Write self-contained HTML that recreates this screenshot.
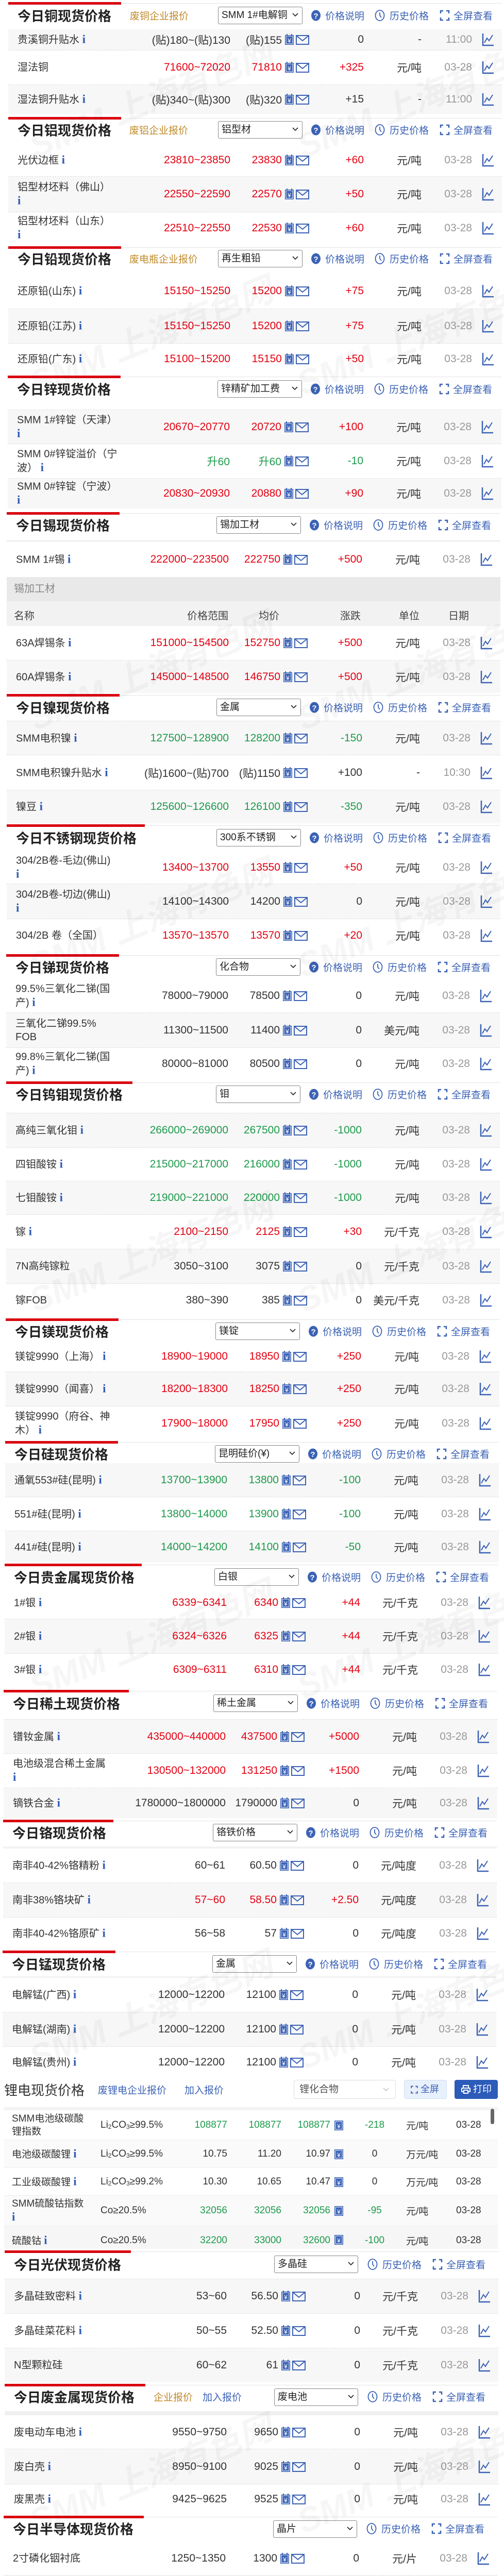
<!DOCTYPE html>
<html><head><meta charset="utf-8">
<style>
*{margin:0;padding:0;box-sizing:border-box}
html,body{width:978px;height:5140px;overflow:hidden}
body{background:#fff;font-family:"Liberation Sans","Noto Sans CJK SC",sans-serif;color:#333}
#root{position:relative;width:978px;height:5140px;overflow:hidden}
.w{position:absolute;left:0;top:0;width:978px;height:5140px}
.r{position:absolute;left:16px;width:958px;border-bottom:1px dashed #dcdcdc;font-size:21px;color:#333;background:#fff}
.r.g{background:#f7f7f7}
.r>*{position:absolute;top:50%;transform:translateY(-50%);white-space:nowrap}
.n{left:18px;width:210px;line-height:26px;font-size:20px;white-space:normal!important}
.n i,.li i{font-family:"Liberation Serif",serif;font-weight:bold;font-style:normal;color:#2f5bb5;font-size:23px}
.a{right:527px}.b{right:427px}.ic{left:536px}.c{right:268px}.d{right:156px}.e{right:58px;color:#999}.ch{left:919px}
.R{color:#e60012}.G{color:#1e9a4c}
.rb{position:absolute;left:16px;height:5px;background:#d9000f}
.hl{position:absolute;left:16px;width:958px;height:1px;background:#e4e4e4}
.t{position:absolute;left:34px;font-size:26px;font-weight:bold;color:#222;transform:translateY(-50%);white-space:nowrap}
.lk{position:absolute;font-size:19px;color:#c08a2a;transform:translateY(-50%);white-space:nowrap}
.lb{color:#3b62b5}
.sel{position:absolute;left:423px;width:164px;height:34px;border:1px solid #888;border-radius:3px;background:#fff;font-size:19px;line-height:32px;padding-left:6px;color:#222;overflow:hidden;white-space:nowrap}
.sel svg{position:absolute;right:7px;top:11px}
.s2{left:539px;width:163px}
.tl{position:absolute;font-size:19px;color:#3b62b5;transform:translateY(-50%);white-space:nowrap}
.ti{position:absolute;transform:translateY(-50%)}
.band{position:absolute;left:13px;width:958px}
.wm{position:absolute;font-size:66px;font-weight:bold;color:rgba(0,0,0,0.035);transform:rotate(-22deg);white-space:nowrap;z-index:5;pointer-events:none;font-style:italic}
.lr{position:absolute;left:8px;width:958px;border-bottom:1px solid #eee;font-size:19px;color:#333}
.lr>*{position:absolute;top:50%;transform:translateY(-50%);white-space:nowrap}
.li{left:15px;width:160px;line-height:25px;white-space:normal!important}
.sp{left:187px}.v1{right:525px}.v2{right:420px}.v3{right:325px}.yi{left:640px}.v4{left:680px;width:78px;text-align:center}.un{left:780px}.dt{left:877px}
sub{font-size:12px;vertical-align:-2px}
</style></head><body><div id="root">
<svg width="0" height="0" style="position:absolute">
<defs>
<symbol id="ye" viewBox="0 0 50 22"><rect x="1" y="2" width="17" height="19" fill="#3b62b5"/><rect x="3" y="4" width="13" height="15" fill="none" stroke="#fff" stroke-width="1"/><rect x="4" y="0" width="2" height="4" fill="#3b62b5"/><rect x="13" y="0" width="2" height="4" fill="#3b62b5"/><text x="9.5" y="17" font-size="12" fill="#fff" text-anchor="middle" font-family="Liberation Sans">¥</text><rect x="23" y="3" width="24" height="17" fill="none" stroke="#3b62b5" stroke-width="2"/><polyline points="23,3 35,13 47,3" fill="none" stroke="#3b62b5" stroke-width="2"/></symbol>
<symbol id="yo" viewBox="0 0 18 22"><rect x="1" y="2" width="17" height="19" fill="#3b62b5"/><rect x="3" y="4" width="13" height="15" fill="none" stroke="#fff" stroke-width="1"/><text x="9.5" y="17" font-size="12" fill="#fff" text-anchor="middle" font-family="Liberation Sans">¥</text></symbol>
<symbol id="ch" viewBox="0 0 24 26"><path d="M2 1V24H23" fill="none" stroke="#3b62b5" stroke-width="2.5"/><polyline points="5,19 10,10 14,15 21,4" fill="none" stroke="#3b62b5" stroke-width="2"/></symbol>
<symbol id="q" viewBox="0 0 20 22"><ellipse cx="10" cy="11" rx="9" ry="10.5" fill="#3b62b5"/><text x="10" y="17" font-size="15" font-weight="bold" fill="#fff" text-anchor="middle" font-family="Liberation Sans">?</text></symbol>
<symbol id="ck" viewBox="0 0 20 22"><ellipse cx="10" cy="11" rx="8.5" ry="10" fill="none" stroke="#3b62b5" stroke-width="1.8"/><path d="M10 5V11L13 15" fill="none" stroke="#3b62b5" stroke-width="1.8"/></symbol>
<symbol id="fs" viewBox="0 0 20 22"><path d="M2 7V2H7M13 2H18V7M18 15V20H13M7 20H2V15" fill="none" stroke="#3b62b5" stroke-width="2.5"/></symbol>
<symbol id="dn" viewBox="0 0 12 8"><polyline points="1,1 6,6 11,1" fill="none" stroke="#222" stroke-width="1.6"/></symbol>
</defs></svg>

<div class="wm" style="left:40px;top:140px">SMM 上海有色网</div><div class="wm" style="left:560px;top:140px">SMM 上海有色网</div>
<div class="wm" style="left:40px;top:600px">SMM 上海有色网</div><div class="wm" style="left:560px;top:600px">SMM 上海有色网</div>
<div class="wm" style="left:40px;top:1250px">SMM 上海有色网</div><div class="wm" style="left:560px;top:1250px">SMM 上海有色网</div>
<div class="wm" style="left:40px;top:1730px">SMM 上海有色网</div><div class="wm" style="left:560px;top:1730px">SMM 上海有色网</div>
<div class="wm" style="left:40px;top:2380px">SMM 上海有色网</div><div class="wm" style="left:560px;top:2380px">SMM 上海有色网</div>
<div class="wm" style="left:40px;top:3130px">SMM 上海有色网</div><div class="wm" style="left:560px;top:3130px">SMM 上海有色网</div>
<div class="wm" style="left:40px;top:3850px">SMM 上海有色网</div><div class="wm" style="left:560px;top:3850px">SMM 上海有色网</div>
<div class="wm" style="left:40px;top:4750px">SMM 上海有色网</div><div class="wm" style="left:560px;top:4750px">SMM 上海有色网</div>

<!-- COPPER -->
<div class="w">
<div class="r g" style="top:57px;height:41px"><span class="n">贵溪铜升贴水 <i>i</i></span><span class="a">(贴)180~(贴)130</span><span class="b">(贴)155</span><svg class="ic" width="50" height="22"><use href="#ye"/></svg><span class="c">0</span><span class="d">-</span><span class="e">11:00</span><svg class="ch" width="24" height="26"><use href="#ch"/></svg></div>
<div class="r" style="top:98px;height:67px"><span class="n">湿法铜</span><span class="a R">71600~72020</span><span class="b R">71810</span><svg class="ic" width="50" height="22"><use href="#ye"/></svg><span class="c R">+325</span><span class="d">元/吨</span><span class="e">03-28</span><svg class="ch" width="24" height="26"><use href="#ch"/></svg></div>
<div class="r g" style="top:165px;height:56px;border-bottom:none"><span class="n">湿法铜升贴水 <i>i</i></span><span class="a">(贴)340~(贴)300</span><span class="b">(贴)320</span><svg class="ic" width="50" height="22"><use href="#ye"/></svg><span class="c">+15</span><span class="d">-</span><span class="e">11:00</span><svg class="ch" width="24" height="26"><use href="#ch"/></svg></div>
<div class="band" style="top:0;left:16px;height:56px;background:#fff"></div>
<div class="hl" style="top:6px"></div><div class="rb" style="top:4px;width:219px"></div>
<div class="t" style="top:30px">今日铜现货价格</div>
<div class="lk" style="top:30px;left:252px">废铜企业报价</div>
<div class="sel" style="top:13px">SMM 1#电解铜<svg width="12" height="8"><use href="#dn"/></svg></div>
<svg class="ti" style="left:603px;top:30px" width="20" height="22"><use href="#q"/></svg><div class="tl" style="left:631px;top:30px">价格说明</div>
<svg class="ti" style="left:727px;top:30px" width="20" height="22"><use href="#ck"/></svg><div class="tl" style="left:756px;top:30px">历史价格</div>
<svg class="ti" style="left:853px;top:30px" width="20" height="22"><use href="#fs"/></svg><div class="tl" style="left:880px;top:30px">全屏查看</div>
</div>

<!-- ALUMINIUM -->
<div class="w">
<div class="hl" style="top:229px"></div><div class="rb" style="top:227px;width:219px"></div>
<div class="t" style="top:252px">今日铝现货价格</div>
<div class="lk" style="top:252px;left:251px">废铝企业报价</div>
<div class="sel" style="top:235px">铝型材<svg width="12" height="8"><use href="#dn"/></svg></div>
<svg class="ti" style="left:603px;top:252px" width="20" height="22"><use href="#q"/></svg><div class="tl" style="left:631px;top:252px">价格说明</div>
<svg class="ti" style="left:727px;top:252px" width="20" height="22"><use href="#ck"/></svg><div class="tl" style="left:756px;top:252px">历史价格</div>
<svg class="ti" style="left:853px;top:252px" width="20" height="22"><use href="#fs"/></svg><div class="tl" style="left:880px;top:252px">全屏查看</div>
<div class="r" style="top:280px;height:63px"><span class="n">光伏边框 <i>i</i></span><span class="a R">23810~23850</span><span class="b R">23830</span><svg class="ic" width="50" height="22"><use href="#ye"/></svg><span class="c R">+60</span><span class="d">元/吨</span><span class="e">03-28</span><svg class="ch" width="24" height="26"><use href="#ch"/></svg></div>
<div class="r g" style="top:343px;height:69px"><span class="n">铝型材坯料（佛山）<br><i>i</i></span><span class="a R">22550~22590</span><span class="b R">22570</span><svg class="ic" width="50" height="22"><use href="#ye"/></svg><span class="c R">+50</span><span class="d">元/吨</span><span class="e">03-28</span><svg class="ch" width="24" height="26"><use href="#ch"/></svg></div>
<div class="r" style="top:412px;height:62px;border-bottom:none"><span class="n">铝型材坯料（山东）<br><i>i</i></span><span class="a R">22510~22550</span><span class="b R">22530</span><svg class="ic" width="50" height="22"><use href="#ye"/></svg><span class="c R">+60</span><span class="d">元/吨</span><span class="e">03-28</span><svg class="ch" width="24" height="26"><use href="#ch"/></svg></div>
</div>

<!-- LEAD -->
<div class="w">
<div class="hl" style="top:480px"></div><div class="rb" style="top:478px;width:219px"></div>
<div class="t" style="top:502px">今日铅现货价格</div>
<div class="lk" style="top:502px;left:251px">废电瓶企业报价</div>
<div class="sel" style="top:485px">再生粗铅<svg width="12" height="8"><use href="#dn"/></svg></div>
<svg class="ti" style="left:603px;top:502px" width="20" height="22"><use href="#q"/></svg><div class="tl" style="left:631px;top:502px">价格说明</div>
<svg class="ti" style="left:727px;top:502px" width="20" height="22"><use href="#ck"/></svg><div class="tl" style="left:756px;top:502px">历史价格</div>
<svg class="ti" style="left:853px;top:502px" width="20" height="22"><use href="#fs"/></svg><div class="tl" style="left:880px;top:502px">全屏查看</div>
<div class="r" style="top:530px;height:70px"><span class="n">还原铅(山东) <i>i</i></span><span class="a R">15150~15250</span><span class="b R">15200</span><svg class="ic" width="50" height="22"><use href="#ye"/></svg><span class="c R">+75</span><span class="d">元/吨</span><span class="e">03-28</span><svg class="ch" width="24" height="26"><use href="#ch"/></svg></div>
<div class="r g" style="top:600px;height:67px"><span class="n">还原铅(江苏) <i>i</i></span><span class="a R">15150~15250</span><span class="b R">15200</span><svg class="ic" width="50" height="22"><use href="#ye"/></svg><span class="c R">+75</span><span class="d">元/吨</span><span class="e">03-28</span><svg class="ch" width="24" height="26"><use href="#ch"/></svg></div>
<div class="r" style="top:667px;height:59px;border-bottom:none"><span class="n">还原铅(广东) <i>i</i></span><span class="a R">15100~15200</span><span class="b R">15150</span><svg class="ic" width="50" height="22"><use href="#ye"/></svg><span class="c R">+50</span><span class="d">元/吨</span><span class="e">03-28</span><svg class="ch" width="24" height="26"><use href="#ch"/></svg></div>
</div>

<!-- ZINC -->
<div class="w" style="left:-1px">
<div class="hl" style="top:731px"></div><div class="rb" style="top:729px;width:219px"></div>
<div class="t" style="top:755px">今日锌现货价格</div>
<div class="sel" style="top:738px">锌精矿加工费<svg width="12" height="8"><use href="#dn"/></svg></div>
<svg class="ti" style="left:603px;top:755px" width="20" height="22"><use href="#q"/></svg><div class="tl" style="left:631px;top:755px">价格说明</div>
<svg class="ti" style="left:727px;top:755px" width="20" height="22"><use href="#ck"/></svg><div class="tl" style="left:756px;top:755px">历史价格</div>
<svg class="ti" style="left:853px;top:755px" width="20" height="22"><use href="#fs"/></svg><div class="tl" style="left:880px;top:755px">全屏查看</div>
<div class="hl" style="top:795px;background:none;border-top:1px dashed #dcdcdc"></div>
<div class="r g" style="top:796px;height:66px"><span class="n">SMM 1#锌锭（天津）<br><i>i</i></span><span class="a R">20670~20770</span><span class="b R">20720</span><svg class="ic" width="50" height="22"><use href="#ye"/></svg><span class="c R">+100</span><span class="d">元/吨</span><span class="e">03-28</span><svg class="ch" width="24" height="26"><use href="#ch"/></svg></div>
<div class="r" style="top:862px;height:67px"><span class="n">SMM 0#锌锭溢价（宁<br>波） <i>i</i></span><span class="a G">升60</span><span class="b G">升60</span><svg class="ic" width="50" height="22"><use href="#ye"/></svg><span class="c G">-10</span><span class="d">元/吨</span><span class="e">03-28</span><svg class="ch" width="24" height="26"><use href="#ch"/></svg></div>
<div class="r g" style="top:929px;height:58px;border-bottom:none"><span class="n">SMM 0#锌锭（宁波）<br><i>i</i></span><span class="a R">20830~20930</span><span class="b R">20880</span><svg class="ic" width="50" height="22"><use href="#ye"/></svg><span class="c R">+90</span><span class="d">元/吨</span><span class="e">03-28</span><svg class="ch" width="24" height="26"><use href="#ch"/></svg></div>
</div>

<!-- TIN -->
<div class="w" style="left:-3px">
<div class="hl" style="top:996px"></div><div class="rb" style="top:994px;width:219px"></div>
<div class="t" style="top:1019px">今日锡现货价格</div>
<div class="sel" style="top:1002px">锡加工材<svg width="12" height="8"><use href="#dn"/></svg></div>
<svg class="ti" style="left:603px;top:1019px" width="20" height="22"><use href="#q"/></svg><div class="tl" style="left:631px;top:1019px">价格说明</div>
<svg class="ti" style="left:727px;top:1019px" width="20" height="22"><use href="#ck"/></svg><div class="tl" style="left:756px;top:1019px">历史价格</div>
<svg class="ti" style="left:853px;top:1019px" width="20" height="22"><use href="#fs"/></svg><div class="tl" style="left:880px;top:1019px">全屏查看</div>
<div class="r" style="top:1048px;height:72px;border-bottom:none;border-top:4px solid #f2f2f2"><span class="n">SMM 1#锡 <i>i</i></span><span class="a R">222000~223500</span><span class="b R">222750</span><svg class="ic" width="50" height="22"><use href="#ye"/></svg><span class="c R">+500</span><span class="d">元/吨</span><span class="e">03-28</span><svg class="ch" width="24" height="26"><use href="#ch"/></svg></div>
<div class="band" style="top:1120px;left:16px;height:47px;background:#e9e9e9;font-size:20px;color:#888;padding-left:14px;line-height:47px">锡加工材</div>
<div class="band" style="top:1167px;left:16px;height:48px;background:#f2f2f2;font-size:20px;color:#444">
<span style="position:absolute;left:14px;top:12px">名称</span><span style="position:absolute;left:350px;top:12px">价格范围</span><span style="position:absolute;left:489px;top:12px">均价</span><span style="position:absolute;left:647px;top:12px">涨跌</span><span style="position:absolute;left:761px;top:12px">单位</span><span style="position:absolute;left:857px;top:12px">日期</span></div>
<div class="r" style="top:1215px;height:67px"><span class="n">63A焊锡条 <i>i</i></span><span class="a R">151000~154500</span><span class="b R">152750</span><svg class="ic" width="50" height="22"><use href="#ye"/></svg><span class="c R">+500</span><span class="d">元/吨</span><span class="e">03-28</span><svg class="ch" width="24" height="26"><use href="#ch"/></svg></div>
<div class="r g" style="top:1282px;height:63px;border-bottom:none"><span class="n">60A焊锡条 <i>i</i></span><span class="a R">145000~148500</span><span class="b R">146750</span><svg class="ic" width="50" height="22"><use href="#ye"/></svg><span class="c R">+500</span><span class="d">元/吨</span><span class="e">03-28</span><svg class="ch" width="24" height="26"><use href="#ch"/></svg></div>
</div>

<!-- NICKEL -->
<div class="w" style="left:-3px">
<div class="hl" style="top:1349px"></div><div class="rb" style="top:1347px;width:219px"></div>
<div class="t" style="top:1373px">今日镍现货价格</div>
<div class="sel" style="top:1356px">金属<svg width="12" height="8"><use href="#dn"/></svg></div>
<svg class="ti" style="left:603px;top:1373px" width="20" height="22"><use href="#q"/></svg><div class="tl" style="left:631px;top:1373px">价格说明</div>
<svg class="ti" style="left:727px;top:1373px" width="20" height="22"><use href="#ck"/></svg><div class="tl" style="left:756px;top:1373px">历史价格</div>
<svg class="ti" style="left:853px;top:1373px" width="20" height="22"><use href="#fs"/></svg><div class="tl" style="left:880px;top:1373px">全屏查看</div>
<div class="r g" style="top:1399px;height:67px;border-top:1px dashed #dcdcdc"><span class="n">SMM电积镍 <i>i</i></span><span class="a G">127500~128900</span><span class="b G">128200</span><svg class="ic" width="50" height="22"><use href="#ye"/></svg><span class="c G">-150</span><span class="d">元/吨</span><span class="e">03-28</span><svg class="ch" width="24" height="26"><use href="#ch"/></svg></div>
<div class="r" style="top:1466px;height:68px"><span class="n">SMM电积镍升贴水 <i>i</i></span><span class="a">(贴)1600~(贴)700</span><span class="b">(贴)1150</span><svg class="ic" width="50" height="22"><use href="#ye"/></svg><span class="c">+100</span><span class="d">-</span><span class="e">10:30</span><svg class="ch" width="24" height="26"><use href="#ch"/></svg></div>
<div class="r g" style="top:1534px;height:64px;border-bottom:none"><span class="n">镍豆 <i>i</i></span><span class="a G">125600~126600</span><span class="b G">126100</span><svg class="ic" width="50" height="22"><use href="#ye"/></svg><span class="c G">-350</span><span class="d">元/吨</span><span class="e">03-28</span><svg class="ch" width="24" height="26"><use href="#ch"/></svg></div>
</div>

<!-- STAINLESS -->
<div class="w" style="left:-3px">
<div class="hl" style="top:1602px"></div><div class="rb" style="top:1600px;width:268px"></div>
<div class="t" style="top:1626px">今日不锈钢现货价格</div>
<div class="sel" style="top:1609px">300系不锈钢<svg width="12" height="8"><use href="#dn"/></svg></div>
<svg class="ti" style="left:603px;top:1626px" width="20" height="22"><use href="#q"/></svg><div class="tl" style="left:631px;top:1626px">价格说明</div>
<svg class="ti" style="left:727px;top:1626px" width="20" height="22"><use href="#ck"/></svg><div class="tl" style="left:756px;top:1626px">历史价格</div>
<svg class="ti" style="left:853px;top:1626px" width="20" height="22"><use href="#fs"/></svg><div class="tl" style="left:880px;top:1626px">全屏查看</div>
<div class="r" style="top:1652px;height:64px"><span class="n">304/2B卷-毛边(佛山)<br><i>i</i></span><span class="a R">13400~13700</span><span class="b R">13550</span><svg class="ic" width="50" height="22"><use href="#ye"/></svg><span class="c R">+50</span><span class="d">元/吨</span><span class="e">03-28</span><svg class="ch" width="24" height="26"><use href="#ch"/></svg></div>
<div class="r g" style="top:1716px;height:68px"><span class="n">304/2B卷-切边(佛山)<br><i>i</i></span><span class="a">14100~14300</span><span class="b">14200</span><svg class="ic" width="50" height="22"><use href="#ye"/></svg><span class="c">0</span><span class="d">元/吨</span><span class="e">03-28</span><svg class="ch" width="24" height="26"><use href="#ch"/></svg></div>
<div class="r" style="top:1784px;height:63px;border-bottom:none"><span class="n">304/2B 卷（全国）</span><span class="a R">13570~13570</span><span class="b R">13570</span><svg class="ic" width="50" height="22"><use href="#ye"/></svg><span class="c R">+20</span><span class="d">元/吨</span><span class="e">03-28</span><svg class="ch" width="24" height="26"><use href="#ch"/></svg></div>
</div>

<!-- ANTIMONY -->
<div class="w" style="left:-4px">
<div class="hl" style="top:1854px"></div><div class="rb" style="top:1852px;width:219px"></div>
<div class="t" style="top:1877px">今日锑现货价格</div>
<div class="sel" style="top:1860px">化合物<svg width="12" height="8"><use href="#dn"/></svg></div>
<svg class="ti" style="left:603px;top:1877px" width="20" height="22"><use href="#q"/></svg><div class="tl" style="left:631px;top:1877px">价格说明</div>
<svg class="ti" style="left:727px;top:1877px" width="20" height="22"><use href="#ck"/></svg><div class="tl" style="left:756px;top:1877px">历史价格</div>
<svg class="ti" style="left:853px;top:1877px" width="20" height="22"><use href="#fs"/></svg><div class="tl" style="left:880px;top:1877px">全屏查看</div>
<div class="r" style="top:1900px;height:66px"><span class="n">99.5%三氧化二锑(国<br>产) <i>i</i></span><span class="a">78000~79000</span><span class="b">78500</span><svg class="ic" width="50" height="22"><use href="#ye"/></svg><span class="c">0</span><span class="d">元/吨</span><span class="e">03-28</span><svg class="ch" width="24" height="26"><use href="#ch"/></svg></div>
<div class="r g" style="top:1966px;height:68px"><span class="n">三氧化二锑99.5%<br>FOB</span><span class="a">11300~11500</span><span class="b">11400</span><svg class="ic" width="50" height="22"><use href="#ye"/></svg><span class="c">0</span><span class="d">美元/吨</span><span class="e">03-28</span><svg class="ch" width="24" height="26"><use href="#ch"/></svg></div>
<div class="r" style="top:2034px;height:62px;border-bottom:none"><span class="n">99.8%三氧化二锑(国<br>产) <i>i</i></span><span class="a">80000~81000</span><span class="b">80500</span><svg class="ic" width="50" height="22"><use href="#ye"/></svg><span class="c">0</span><span class="d">元/吨</span><span class="e">03-28</span><svg class="ch" width="24" height="26"><use href="#ch"/></svg></div>
</div>

<!-- TUNGSTEN MOLY -->
<div class="w" style="left:-4px">
<div class="hl" style="top:2101px"></div><div class="rb" style="top:2099px;width:245px"></div>
<div class="t" style="top:2124px">今日钨钼现货价格</div>
<div class="sel" style="top:2107px">钼<svg width="12" height="8"><use href="#dn"/></svg></div>
<svg class="ti" style="left:603px;top:2124px" width="20" height="22"><use href="#q"/></svg><div class="tl" style="left:631px;top:2124px">价格说明</div>
<svg class="ti" style="left:727px;top:2124px" width="20" height="22"><use href="#ck"/></svg><div class="tl" style="left:756px;top:2124px">历史价格</div>
<svg class="ti" style="left:853px;top:2124px" width="20" height="22"><use href="#fs"/></svg><div class="tl" style="left:880px;top:2124px">全屏查看</div>
<div class="r g" style="top:2160px;height:68px;border-top:1px dashed #dcdcdc"><span class="n">高纯三氧化钼 <i>i</i></span><span class="a G">266000~269000</span><span class="b G">267500</span><svg class="ic" width="50" height="22"><use href="#ye"/></svg><span class="c G">-1000</span><span class="d">元/吨</span><span class="e">03-28</span><svg class="ch" width="24" height="26"><use href="#ch"/></svg></div>
<div class="r" style="top:2228px;height:65px"><span class="n">四钼酸铵 <i>i</i></span><span class="a G">215000~217000</span><span class="b G">216000</span><svg class="ic" width="50" height="22"><use href="#ye"/></svg><span class="c G">-1000</span><span class="d">元/吨</span><span class="e">03-28</span><svg class="ch" width="24" height="26"><use href="#ch"/></svg></div>
<div class="r g" style="top:2293px;height:65px"><span class="n">七钼酸铵 <i>i</i></span><span class="a G">219000~221000</span><span class="b G">220000</span><svg class="ic" width="50" height="22"><use href="#ye"/></svg><span class="c G">-1000</span><span class="d">元/吨</span><span class="e">03-28</span><svg class="ch" width="24" height="26"><use href="#ch"/></svg></div>
<div class="r" style="top:2358px;height:67px"><span class="n">镓 <i>i</i></span><span class="a R">2100~2150</span><span class="b R">2125</span><svg class="ic" width="50" height="22"><use href="#ye"/></svg><span class="c R">+30</span><span class="d">元/千克</span><span class="e">03-28</span><svg class="ch" width="24" height="26"><use href="#ch"/></svg></div>
<div class="r g" style="top:2425px;height:67px"><span class="n">7N高纯镓粒</span><span class="a">3050~3100</span><span class="b">3075</span><svg class="ic" width="50" height="22"><use href="#ye"/></svg><span class="c">0</span><span class="d">元/千克</span><span class="e">03-28</span><svg class="ch" width="24" height="26"><use href="#ch"/></svg></div>
<div class="r" style="top:2492px;height:64px;border-bottom:none"><span class="n">镓FOB</span><span class="a">380~390</span><span class="b">385</span><svg class="ic" width="50" height="22"><use href="#ye"/></svg><span class="c">0</span><span class="d">美元/千克</span><span class="e">03-28</span><svg class="ch" width="24" height="26"><use href="#ch"/></svg></div>
</div>

<!-- MAGNESIUM -->
<div class="w" style="left:-5px">
<div class="hl" style="top:2561px"></div><div class="rb" style="top:2559px;width:219px"></div>
<div class="t" style="top:2584px">今日镁现货价格</div>
<div class="sel" style="top:2567px">镁锭<svg width="12" height="8"><use href="#dn"/></svg></div>
<svg class="ti" style="left:603px;top:2584px" width="20" height="22"><use href="#q"/></svg><div class="tl" style="left:631px;top:2584px">价格说明</div>
<svg class="ti" style="left:727px;top:2584px" width="20" height="22"><use href="#ck"/></svg><div class="tl" style="left:756px;top:2584px">历史价格</div>
<svg class="ti" style="left:853px;top:2584px" width="20" height="22"><use href="#fs"/></svg><div class="tl" style="left:880px;top:2584px">全屏查看</div>
<div class="r" style="top:2603px;height:60px"><span class="n">镁锭9990（上海） <i>i</i></span><span class="a R">18900~19000</span><span class="b R">18950</span><svg class="ic" width="50" height="22"><use href="#ye"/></svg><span class="c R">+250</span><span class="d">元/吨</span><span class="e">03-28</span><svg class="ch" width="24" height="26"><use href="#ch"/></svg></div>
<div class="r g" style="top:2663px;height:67px"><span class="n">镁锭9990（闻喜） <i>i</i></span><span class="a R">18200~18300</span><span class="b R">18250</span><svg class="ic" width="50" height="22"><use href="#ye"/></svg><span class="c R">+250</span><span class="d">元/吨</span><span class="e">03-28</span><svg class="ch" width="24" height="26"><use href="#ch"/></svg></div>
<div class="r" style="top:2730px;height:65px;border-bottom:none"><span class="n">镁锭9990（府谷、神<br>木） <i>i</i></span><span class="a R">17900~18000</span><span class="b R">17950</span><svg class="ic" width="50" height="22"><use href="#ye"/></svg><span class="c R">+250</span><span class="d">元/吨</span><span class="e">03-28</span><svg class="ch" width="24" height="26"><use href="#ch"/></svg></div>
</div>

<!-- SILICON -->
<div class="w" style="left:-6px">
<div class="hl" style="top:2799px"></div><div class="rb" style="top:2797px;width:219px"></div>
<div class="t" style="top:2822px">今日硅现货价格</div>
<div class="sel" style="top:2805px">昆明硅价(¥)<svg width="12" height="8"><use href="#dn"/></svg></div>
<svg class="ti" style="left:603px;top:2822px" width="20" height="22"><use href="#q"/></svg><div class="tl" style="left:631px;top:2822px">价格说明</div>
<svg class="ti" style="left:727px;top:2822px" width="20" height="22"><use href="#ck"/></svg><div class="tl" style="left:756px;top:2822px">历史价格</div>
<svg class="ti" style="left:853px;top:2822px" width="20" height="22"><use href="#fs"/></svg><div class="tl" style="left:880px;top:2822px">全屏查看</div>
<div class="r g" style="top:2840px;height:66px"><span class="n">通氧553#硅(昆明) <i>i</i></span><span class="a G">13700~13900</span><span class="b G">13800</span><svg class="ic" width="50" height="22"><use href="#ye"/></svg><span class="c G">-100</span><span class="d">元/吨</span><span class="e">03-28</span><svg class="ch" width="24" height="26"><use href="#ch"/></svg></div>
<div class="r" style="top:2906px;height:66px"><span class="n">551#硅(昆明) <i>i</i></span><span class="a G">13800~14000</span><span class="b G">13900</span><svg class="ic" width="50" height="22"><use href="#ye"/></svg><span class="c G">-100</span><span class="d">元/吨</span><span class="e">03-28</span><svg class="ch" width="24" height="26"><use href="#ch"/></svg></div>
<div class="r g" style="top:2972px;height:61px;border-bottom:none"><span class="n">441#硅(昆明) <i>i</i></span><span class="a G">14000~14200</span><span class="b G">14100</span><svg class="ic" width="50" height="22"><use href="#ye"/></svg><span class="c G">-50</span><span class="d">元/吨</span><span class="e">03-28</span><svg class="ch" width="24" height="26"><use href="#ch"/></svg></div>
</div>

<!-- PRECIOUS -->
<div class="w" style="left:-7px">
<div class="hl" style="top:3037px"></div><div class="rb" style="top:3035px;width:266px"></div>
<div class="t" style="top:3061px">今日贵金属现货价格</div>
<div class="sel" style="top:3044px">白银<svg width="12" height="8"><use href="#dn"/></svg></div>
<svg class="ti" style="left:603px;top:3061px" width="20" height="22"><use href="#q"/></svg><div class="tl" style="left:631px;top:3061px">价格说明</div>
<svg class="ti" style="left:727px;top:3061px" width="20" height="22"><use href="#ck"/></svg><div class="tl" style="left:756px;top:3061px">历史价格</div>
<svg class="ti" style="left:853px;top:3061px" width="20" height="22"><use href="#fs"/></svg><div class="tl" style="left:880px;top:3061px">全屏查看</div>
<div class="r" style="top:3080px;height:63px"><span class="n">1#银 <i>i</i></span><span class="a R">6339~6341</span><span class="b R">6340</span><svg class="ic" width="50" height="22"><use href="#ye"/></svg><span class="c R">+44</span><span class="d">元/千克</span><span class="e">03-28</span><svg class="ch" width="24" height="26"><use href="#ch"/></svg></div>
<div class="r g" style="top:3143px;height:67px"><span class="n">2#银 <i>i</i></span><span class="a R">6324~6326</span><span class="b R">6325</span><svg class="ic" width="50" height="22"><use href="#ye"/></svg><span class="c R">+44</span><span class="d">元/千克</span><span class="e">03-28</span><svg class="ch" width="24" height="26"><use href="#ch"/></svg></div>
<div class="r" style="top:3210px;height:62px;border-bottom:none"><span class="n">3#银 <i>i</i></span><span class="a R">6309~6311</span><span class="b R">6310</span><svg class="ic" width="50" height="22"><use href="#ye"/></svg><span class="c R">+44</span><span class="d">元/千克</span><span class="e">03-28</span><svg class="ch" width="24" height="26"><use href="#ch"/></svg></div>
</div>

<!-- RARE EARTH -->
<div class="w" style="left:-9px">
<div class="hl" style="top:3282px"></div><div class="rb" style="top:3280px;width:243px"></div>
<div class="t" style="top:3306px">今日稀土现货价格</div>
<div class="sel" style="top:3289px">稀土金属<svg width="12" height="8"><use href="#dn"/></svg></div>
<svg class="ti" style="left:603px;top:3306px" width="20" height="22"><use href="#q"/></svg><div class="tl" style="left:631px;top:3306px">价格说明</div>
<svg class="ti" style="left:727px;top:3306px" width="20" height="22"><use href="#ck"/></svg><div class="tl" style="left:756px;top:3306px">历史价格</div>
<svg class="ti" style="left:853px;top:3306px" width="20" height="22"><use href="#fs"/></svg><div class="tl" style="left:880px;top:3306px">全屏查看</div>
<div class="r g" style="top:3337px;height:67px;border-top:1px dashed #dcdcdc"><span class="n">镨钕金属 <i>i</i></span><span class="a R">435000~440000</span><span class="b R">437500</span><svg class="ic" width="50" height="22"><use href="#ye"/></svg><span class="c R">+5000</span><span class="d">元/吨</span><span class="e">03-28</span><svg class="ch" width="24" height="26"><use href="#ch"/></svg></div>
<div class="r" style="top:3404px;height:67px"><span class="n">电池级混合稀土金属<br><i>i</i></span><span class="a R">130500~132000</span><span class="b R">131250</span><svg class="ic" width="50" height="22"><use href="#ye"/></svg><span class="c R">+1500</span><span class="d">元/吨</span><span class="e">03-28</span><svg class="ch" width="24" height="26"><use href="#ch"/></svg></div>
<div class="r g" style="top:3471px;height:58px;border-bottom:none"><span class="n">镝铁合金 <i>i</i></span><span class="a">1780000~1800000</span><span class="b">1790000</span><svg class="ic" width="50" height="22"><use href="#ye"/></svg><span class="c">0</span><span class="d">元/吨</span><span class="e">03-28</span><svg class="ch" width="24" height="26"><use href="#ch"/></svg></div>
</div>

<!-- CHROME -->
<div class="w" style="left:-10px">
<div class="hl" style="top:3534px"></div><div class="rb" style="top:3532px;width:214px"></div>
<div class="t" style="top:3557px">今日铬现货价格</div>
<div class="sel" style="top:3540px">铬铁价格<svg width="12" height="8"><use href="#dn"/></svg></div>
<svg class="ti" style="left:603px;top:3557px" width="20" height="22"><use href="#q"/></svg><div class="tl" style="left:631px;top:3557px">价格说明</div>
<svg class="ti" style="left:727px;top:3557px" width="20" height="22"><use href="#ck"/></svg><div class="tl" style="left:756px;top:3557px">历史价格</div>
<svg class="ti" style="left:853px;top:3557px" width="20" height="22"><use href="#fs"/></svg><div class="tl" style="left:880px;top:3557px">全屏查看</div>
<div class="r" style="top:3584px;height:71px;border-top:4px solid #f2f2f2"><span class="n">南非40-42%铬精粉 <i>i</i></span><span class="a">60~61</span><span class="b">60.50</span><svg class="ic" width="50" height="22"><use href="#ye"/></svg><span class="c">0</span><span class="d">元/吨度</span><span class="e">03-28</span><svg class="ch" width="24" height="26"><use href="#ch"/></svg></div>
<div class="r g" style="top:3655px;height:67px"><span class="n">南非38%铬块矿 <i>i</i></span><span class="a R">57~60</span><span class="b R">58.50</span><svg class="ic" width="50" height="22"><use href="#ye"/></svg><span class="c R">+2.50</span><span class="d">元/吨度</span><span class="e">03-28</span><svg class="ch" width="24" height="26"><use href="#ch"/></svg></div>
<div class="r" style="top:3722px;height:62px;border-bottom:none"><span class="n">南非40-42%铬原矿 <i>i</i></span><span class="a">56~58</span><span class="b">57</span><svg class="ic" width="50" height="22"><use href="#ye"/></svg><span class="c">0</span><span class="d">元/吨度</span><span class="e">03-28</span><svg class="ch" width="24" height="26"><use href="#ch"/></svg></div>
</div>

<!-- MANGANESE -->
<div class="w" style="left:-11px">
<div class="hl" style="top:3788px"></div><div class="rb" style="top:3786px;width:219px"></div>
<div class="t" style="top:3812px">今日锰现货价格</div>
<div class="sel" style="top:3795px">金属<svg width="12" height="8"><use href="#dn"/></svg></div>
<svg class="ti" style="left:603px;top:3812px" width="20" height="22"><use href="#q"/></svg><div class="tl" style="left:631px;top:3812px">价格说明</div>
<svg class="ti" style="left:727px;top:3812px" width="20" height="22"><use href="#ck"/></svg><div class="tl" style="left:756px;top:3812px">历史价格</div>
<svg class="ti" style="left:853px;top:3812px" width="20" height="22"><use href="#fs"/></svg><div class="tl" style="left:880px;top:3812px">全屏查看</div>
<div class="r" style="top:3836px;height:70px;border-top:3px solid #f2f2f2"><span class="n">电解锰(广西) <i>i</i></span><span class="a">12000~12200</span><span class="b">12100</span><svg class="ic" width="50" height="22"><use href="#ye"/></svg><span class="c">0</span><span class="d">元/吨</span><span class="e">03-28</span><svg class="ch" width="24" height="26"><use href="#ch"/></svg></div>
<div class="r g" style="top:3906px;height:67px"><span class="n">电解锰(湖南) <i>i</i></span><span class="a">12000~12200</span><span class="b">12100</span><svg class="ic" width="50" height="22"><use href="#ye"/></svg><span class="c">0</span><span class="d">元/吨</span><span class="e">03-28</span><svg class="ch" width="24" height="26"><use href="#ch"/></svg></div>
<div class="r" style="top:3973px;height:59px;border-bottom:none"><span class="n">电解锰(贵州) <i>i</i></span><span class="a">12000~12200</span><span class="b">12100</span><svg class="ic" width="50" height="22"><use href="#ye"/></svg><span class="c">0</span><span class="d">元/吨</span><span class="e">03-28</span><svg class="ch" width="24" height="26"><use href="#ch"/></svg></div>
</div>

<!-- LITHIUM -->
<div class="w">
<div style="position:absolute;left:0;top:4032px;width:978px;height:62px;background:#fff"></div>
<div style="position:absolute;left:8px;top:4056px;transform:translateY(-50%);font-size:26px;color:#333">锂电现货价格</div>
<div class="lk lb" style="left:190px;top:4056px">废锂电企业报价</div>
<div class="lk lb" style="left:358px;top:4056px">加入报价</div>
<div style="position:absolute;left:570px;top:4037px;width:198px;height:37px;border:1px solid #ddd;border-radius:4px;font-size:19px;color:#555;line-height:35px;padding-left:10px">锂化合物<svg style="position:absolute;right:12px;top:14px" width="12" height="8"><polyline points="1,1 6,6 11,1" fill="none" stroke="#bbb" stroke-width="1.4"/></svg></div>
<div style="position:absolute;left:784px;top:4037px;width:83px;height:37px;border:1px solid #cfe0f5;background:#e8f0fb;border-radius:4px;font-size:18px;color:#3b62b5;line-height:35px;padding-left:31px"><svg style="position:absolute;left:11px;top:10px" width="16" height="16"><use href="#fs"/></svg>全屏</div>
<div style="position:absolute;left:882px;top:4037px;width:84px;height:37px;background:#2d5bb9;border-radius:4px;font-size:18px;color:#fff;line-height:37px;padding-left:36px"><svg style="position:absolute;left:13px;top:10px" width="18" height="17" viewBox="0 0 18 17"><rect x="4" y="1" width="10" height="5" fill="none" stroke="#fff" stroke-width="2"/><rect x="1" y="6" width="16" height="7" rx="1" fill="none" stroke="#fff" stroke-width="2"/><rect x="5" y="10" width="8" height="6" fill="#2d5bb9" stroke="#fff" stroke-width="2"/></svg>打印</div>
<div style="position:absolute;left:8px;top:4090px;width:958px;height:6px;background:#f3f3f3"></div>
<div class="lr" style="top:4096px;height:58px"><span class="li">SMM电池级碳酸<br>锂指数</span><span class="sp">Li<sub>2</sub>CO<sub>3</sub>≥99.5%</span><span class="v1 G">108877</span><span class="v2 G">108877</span><span class="v3 G">108877</span><svg class="yi" width="18" height="22"><use href="#yo"/></svg><span class="v4 G">-218</span><span class="un">元/吨</span><span class="dt">03-28</span></div>
<div class="lr" style="top:4154px;height:54px;background:#fafafa"><span class="li">电池级碳酸锂 <i>i</i></span><span class="sp">Li<sub>2</sub>CO<sub>3</sub>≥99.5%</span><span class="v1">10.75</span><span class="v2">11.20</span><span class="v3">10.97</span><svg class="yi" width="18" height="22"><use href="#yo"/></svg><span class="v4">0</span><span class="un">万元/吨</span><span class="dt">03-28</span></div>
<div class="lr" style="top:4208px;height:54px"><span class="li">工业级碳酸锂 <i>i</i></span><span class="sp">Li<sub>2</sub>CO<sub>3</sub>≥99.2%</span><span class="v1">10.30</span><span class="v2">10.65</span><span class="v3">10.47</span><svg class="yi" width="18" height="22"><use href="#yo"/></svg><span class="v4">0</span><span class="un">万元/吨</span><span class="dt">03-28</span></div>
<div class="lr" style="top:4262px;height:59px;background:#fafafa"><span class="li">SMM硫酸钴指数<br><i>i</i></span><span class="sp">Co≥20.5%</span><span class="v1 G">32056</span><span class="v2 G">32056</span><span class="v3 G">32056</span><svg class="yi" width="18" height="22"><use href="#yo"/></svg><span class="v4 G">-95</span><span class="un">元/吨</span><span class="dt">03-28</span></div>
<div class="lr" style="top:4321px;height:44px;border-bottom:none;background:#f6f6f6;overflow:hidden"><span class="li" style="top:28px">硫酸钴 <i>i</i></span><span class="sp" style="top:28px">Co≥20.5%</span><span class="v1 G" style="top:28px">32200</span><span class="v2 G" style="top:28px">33000</span><span class="v3 G" style="top:28px">32600</span><svg class="yi" style="top:26px" width="18" height="22"><use href="#yo"/></svg><span class="v4 G" style="top:28px">-100</span><span class="un" style="top:28px">元/吨</span><span class="dt" style="top:28px">03-28</span></div>
<div style="position:absolute;left:952px;top:4093px;width:7px;height:30px;background:#666;border-radius:4px"></div>
</div>

<!-- PV -->
<div class="w" style="left:-7px">
<div class="hl" style="top:4370px"></div><div class="rb" style="top:4368px;width:245px"></div>
<div class="t" style="top:4395px">今日光伏现货价格</div>
<div class="sel s2" style="top:4378px">多晶硅<svg width="12" height="8"><use href="#dn"/></svg></div>
<svg class="ti" style="left:720px;top:4395px" width="20" height="22"><use href="#ck"/></svg><div class="tl" style="left:749px;top:4395px">历史价格</div>
<svg class="ti" style="left:846px;top:4395px" width="20" height="22"><use href="#fs"/></svg><div class="tl" style="left:873px;top:4395px">全屏查看</div>
<div class="r g" style="top:4423px;height:68px;border-top:1px dashed #dcdcdc"><span class="n">多晶硅致密料 <i>i</i></span><span class="a">53~60</span><span class="b">56.50</span><svg class="ic" width="50" height="22"><use href="#ye"/></svg><span class="c">0</span><span class="d">元/千克</span><span class="e">03-28</span><svg class="ch" width="24" height="26"><use href="#ch"/></svg></div>
<div class="r" style="top:4491px;height:67px"><span class="n">多晶硅菜花料 <i>i</i></span><span class="a">50~55</span><span class="b">52.50</span><svg class="ic" width="50" height="22"><use href="#ye"/></svg><span class="c">0</span><span class="d">元/千克</span><span class="e">03-28</span><svg class="ch" width="24" height="26"><use href="#ch"/></svg></div>
<div class="r g" style="top:4558px;height:66px;border-bottom:none"><span class="n">N型颗粒硅</span><span class="a">60~62</span><span class="b">61</span><svg class="ic" width="50" height="22"><use href="#ye"/></svg><span class="c">0</span><span class="d">元/千克</span><span class="e">03-28</span><svg class="ch" width="24" height="26"><use href="#ch"/></svg></div>
</div>

<!-- SCRAP -->
<div class="w" style="left:-7px">
<div class="hl" style="top:4629px"></div><div class="rb" style="top:4627px;width:273px"></div>
<div class="t" style="top:4652px">今日废金属现货价格</div>
<div class="lk" style="left:305px;top:4652px">企业报价</div>
<div class="lk lb" style="left:400px;top:4652px">加入报价</div>
<div class="sel s2" style="top:4636px">废电池<svg width="12" height="8"><use href="#dn"/></svg></div>
<svg class="ti" style="left:720px;top:4652px" width="20" height="22"><use href="#ck"/></svg><div class="tl" style="left:749px;top:4652px">历史价格</div>
<svg class="ti" style="left:846px;top:4652px" width="20" height="22"><use href="#fs"/></svg><div class="tl" style="left:873px;top:4652px">全屏查看</div>
<div class="band" style="top:4680px;left:16px;height:8px;background:#f0f0f0"></div>
<div class="r" style="top:4688px;height:66px"><span class="n">废电动车电池 <i>i</i></span><span class="a">9550~9750</span><span class="b">9650</span><svg class="ic" width="50" height="22"><use href="#ye"/></svg><span class="c">0</span><span class="d">元/吨</span><span class="e">03-28</span><svg class="ch" width="24" height="26"><use href="#ch"/></svg></div>
<div class="r g" style="top:4754px;height:68px"><span class="n">废白壳 <i>i</i></span><span class="a">8950~9100</span><span class="b">9025</span><svg class="ic" width="50" height="22"><use href="#ye"/></svg><span class="c">0</span><span class="d">元/吨</span><span class="e">03-28</span><svg class="ch" width="24" height="26"><use href="#ch"/></svg></div>
<div class="r" style="top:4822px;height:57px;border-bottom:none"><span class="n">废黑壳 <i>i</i></span><span class="a">9425~9625</span><span class="b">9525</span><svg class="ic" width="50" height="22"><use href="#ye"/></svg><span class="c">0</span><span class="d">元/吨</span><span class="e">03-28</span><svg class="ch" width="24" height="26"><use href="#ch"/></svg></div>
</div>

<!-- SEMICONDUCTOR -->
<div class="w" style="left:-9px">
<div class="hl" style="top:4885px"></div><div class="rb" style="top:4883px;width:272px"></div>
<div class="t" style="top:4908px">今日半导体现货价格</div>
<div class="sel s2" style="top:4892px">晶片<svg width="12" height="8"><use href="#dn"/></svg></div>
<svg class="ti" style="left:720px;top:4908px" width="20" height="22"><use href="#ck"/></svg><div class="tl" style="left:749px;top:4908px">历史价格</div>
<svg class="ti" style="left:846px;top:4908px" width="20" height="22"><use href="#fs"/></svg><div class="tl" style="left:873px;top:4908px">全屏查看</div>
<div class="r" style="top:4933px;height:66px"><span class="n">2寸磷化铟衬底</span><span class="a">1250~1350</span><span class="b">1300</span><svg class="ic" width="50" height="22"><use href="#ye"/></svg><span class="c">0</span><span class="d">元/片</span><span class="e">03-28</span><svg class="ch" width="24" height="26"><use href="#ch"/></svg></div>
<div class="r g" style="top:4999px;height:67px"><span class="n">3寸磷化铟衬底</span><span class="a">1650~2550</span><span class="b">2100</span><svg class="ic" width="50" height="22"><use href="#ye"/></svg><span class="c">0</span><span class="d">元/片</span><span class="e">03-28</span><svg class="ch" width="24" height="26"><use href="#ch"/></svg></div>
<div class="r" style="top:5066px;height:67px"><span class="n">4寸磷化铟衬底</span><span class="a">3850~5050</span><span class="b">4450</span><svg class="ic" width="50" height="22"><use href="#ye"/></svg><span class="c">0</span><span class="d">元/片</span><span class="e">03-28</span><svg class="ch" width="24" height="26"><use href="#ch"/></svg></div>
</div>
</div></body></html>
